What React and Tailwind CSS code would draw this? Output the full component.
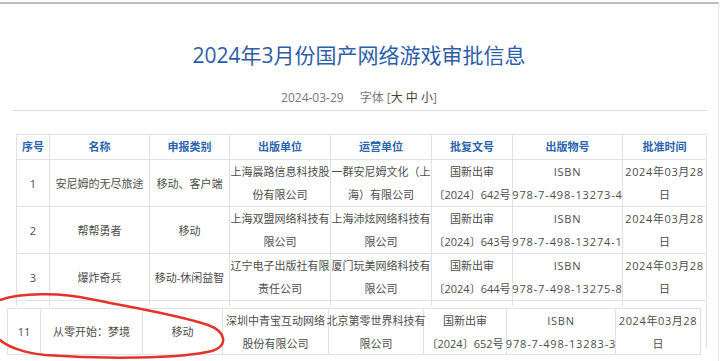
import React from 'react';

const FONT = "font-['Open_Sans','Noto_Sans_CJK_SC',sans-serif]";

const headers = ['序号', '名称', '申报类别', '出版单位', '运营单位', '批复文号', '出版物号', '批准时间'];
const widths = ['w-[33px]', 'w-[100px]', 'w-[80px]', 'w-[101px]', 'w-[101px]', 'w-[81px]', 'w-[110px]', 'w-[84px]'];
const pastedWidths = ['w-[33px]', 'w-[102px]', 'w-[80px]', 'w-[106px]', 'w-[95px]', 'w-[83px]', 'w-[109px]', 'w-[85px]'];

const rows = [
  [
    ['1'],
    ['安尼姆的无尽旅途'],
    ['移动、客户端'],
    ['上海晨路信息科技股', '份有限公司'],
    ['一群安尼姆文化（上', '海）有限公司'],
    ['国新出审', '〔2024〕642号'],
    ['ISBN', '978-7-498-13273-4'],
    ['2024年03月28', '日'],
  ],
  [
    ['2'],
    ['帮帮勇者'],
    ['移动'],
    ['上海双盟网络科技有', '限公司'],
    ['上海沛炫网络科技有', '限公司'],
    ['国新出审', '〔2024〕643号'],
    ['ISBN', '978-7-498-13274-1'],
    ['2024年03月28', '日'],
  ],
  [
    ['3'],
    ['爆炸奇兵'],
    ['移动-休闲益智'],
    ['辽宁电子出版社有限', '责任公司'],
    ['厦门玩美网络科技有', '限公司'],
    ['国新出审', '〔2024〕644号'],
    ['ISBN', '978-7-498-13275-8'],
    ['2024年03月28', '日'],
  ],
];

const pasted = [
  ['11'],
  ['从零开始：梦境'],
  ['移动'],
  ['深圳中青宝互动网络', '股份有限公司'],
  ['北京第零世界科技有', '限公司'],
  ['国新出审', '〔2024〕652号'],
  ['ISBN', '978-7-498-13283-3'],
  ['2024年03月28', '日'],
];

function track(text) {
  if (/^[0-9-]{6,}$/.test(text)) return 'tracking-[0.85px]';
  if (/^2024年/.test(text)) return 'tracking-[0.6px]';
  if (text === 'ISBN') return 'tracking-[0.8px]';
  return '';
}

function Cell({ w, lines }) {
  return (
    <div className={`${w} h-full shrink-0 border-r border-[#dfe1e4] flex flex-col items-center justify-center`}>
      {lines.map((l, i) => (
        <div key={i} className={`h-[23px] leading-[23px] whitespace-nowrap text-[11px] text-[#4d4d4d] ${track(l)}`}>
          {l}
        </div>
      ))}
    </div>
  );
}

export default function App() {
  return (
    <div className={`relative w-[720px] h-[361px] overflow-hidden bg-white ${FONT}`}>
      <div className="pt-[2px] h-full">
        <div className="w-[719px] h-full border-t-2 border-t-[#babec3] border-r border-r-[#e6e8ea]">
          {/* Title */}
          <h1 className="mt-[36px] text-center text-[21px] leading-[30px] font-normal text-[#2f5ea8]">
            2024年3月份国产网络游戏审批信息
          </h1>
          <div className="mt-[18px] h-[20px] leading-[20px] text-center text-[12px] text-[#777]">
            <span>2024-03-29</span>
            <span className="ml-[16px]">字体 [</span>
            <span className="text-[#444]">大 中 小</span>
            <span>]</span>
          </div>
          <div className="mt-[2px] ml-[12px] w-[695px] h-px bg-[#dcdee1]" />

          {/* Table */}
          <div className="mt-[23px] ml-[16px] w-[690px] border-l border-t border-[#dfe1e4]">
            <div className="flex h-[25px] border-b border-[#dfe1e4]">
              {headers.map((h, i) => (
                <div
                  key={h}
                  className={`${widths[i]} h-full shrink-0 border-r border-[#dfe1e4] flex items-center justify-center text-[11px] font-bold text-[#2b65ae]`}
                >
                  {h}
                </div>
              ))}
            </div>
            {rows.map((r, ri) => (
              <div key={ri} className="flex h-[47px] border-b border-[#dfe1e4]">
                {r.map((lines, i) => (
                  <Cell key={i} w={widths[i]} lines={lines} />
                ))}
              </div>
            ))}
            <div className="flex h-[47px]">
              {widths.map((w, i) => (
                <div key={i} className={`${w} h-full shrink-0 border-r border-[#dfe1e4]`} />
              ))}
            </div>
          </div>
        </div>
      </div>

      {/* Pasted row */}
      <div className="absolute left-0 top-[306px] w-[706px] h-[55px] bg-white pt-[2px] pl-[7px]">
        <div className="flex h-[47px] w-[694px] border border-[#dfe1e4]">
          {pasted.map((lines, i) => (
            <Cell key={i} w={pastedWidths[i]} lines={lines} />
          ))}
        </div>
      </div>

      {/* Red hand-drawn mark */}
      <svg className="absolute left-0 top-0" width="720" height="361" viewBox="0 0 720 361" fill="none">
        <path
          d="M0,300 C20,293 60,292 90,299 C130,307 180,315 208,325 C227,332 228,346 212,351 C180,359 100,359 45,355 C25,353 8,347 0,340"
          stroke="#e3342a"
          strokeWidth="2.5"
          strokeLinecap="round"
        />
      </svg>
    </div>
  );
}
